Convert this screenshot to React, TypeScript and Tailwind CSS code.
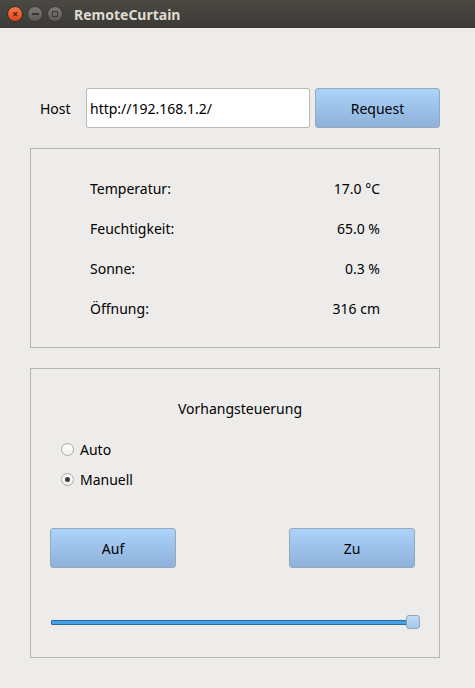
import React, { useState } from 'react';

const font = { fontFamily: '"Noto Sans", "DejaVu Sans", sans-serif' };

const readings = [
  { label: 'Temperatur:', value: '17.0 °C' },
  { label: 'Feuchtigkeit:', value: '65.0 %' },
  { label: 'Sonne:', value: '0.3 %' },
  { label: 'Öffnung:', value: '316 cm' },
];

function TitleBar() {
  return (
    <div className="flex h-[28px] items-center bg-gradient-to-b from-[#4a4944] to-[#3b3a36] pl-[7px]">
      <div className="flex h-[16px] w-[16px] items-center justify-center rounded-full border border-[#3a2a22] bg-gradient-to-b from-[#f4774b] to-[#e0451d] text-[10px] font-bold leading-none text-[#4a1a0a]">
        ×
      </div>
      <div className="ml-[4px] flex h-[16px] w-[16px] items-center justify-center rounded-full border border-[#3a3935] bg-gradient-to-b from-[#7a7973] to-[#5c5b56]">
        <div className="h-[2px] w-[7px] bg-[#3a3935]" />
      </div>
      <div className="ml-[4px] flex h-[16px] w-[16px] items-center justify-center rounded-full border border-[#3a3935] bg-gradient-to-b from-[#7a7973] to-[#5c5b56]">
        <div className="h-[6px] w-[6px] border border-[#3a3935]" />
      </div>
      <span className="ml-[11px] text-[14px] font-bold text-[#dfdbd2]">RemoteCurtain</span>
    </div>
  );
}

function BlueButton({ label, className = '' }: { label: string; className?: string }) {
  return (
    <button
      className={`flex h-[40px] items-center justify-center rounded-[3px] border border-[#98a8ba] bg-gradient-to-b from-[#acd4fb] to-[#8eb0d9] text-[14px] text-black ${className}`}
    >
      {label}
    </button>
  );
}

function Radio({ label, checked, onClick }: { label: string; checked: boolean; onClick: () => void }) {
  return (
    <div className="flex h-[30px] items-center cursor-pointer" onClick={onClick}>
      <div className="flex h-[13px] w-[13px] items-center justify-center rounded-full border border-[#a9a9a6] bg-gradient-to-b from-white to-[#eeeeec]">
        {checked && <div className="h-[5px] w-[5px] rounded-full bg-[#3c3c3c]" />}
      </div>
      <span className="ml-[6px] text-[14px] text-black">{label}</span>
    </div>
  );
}

export default function App() {
  const [mode, setMode] = useState<'auto' | 'manual'>('manual');

  return (
    <div className="h-[688px] w-[475px] bg-[#edecea]" style={font}>
      <TitleBar />

      <div className="pl-[30px]">
        {/* Host row */}
        <div className="mt-[60px] flex h-[40px] w-[410px] items-center pl-[10px]">
          <span className="w-[46px] text-[14px] text-black">Host</span>
          <input
            defaultValue="http://192.168.1.2/"
            className="h-[40px] w-[224px] rounded-[2px] border border-[#b8b8b5] bg-white px-[3px] text-[14px] text-black outline-none"
          />
          <BlueButton label="Request" className="ml-[5px] w-[125px]" />
        </div>

        {/* Readings */}
        <div className="mt-[20px] h-[200px] w-[410px] border border-[#b5b5b3] pt-[19px] pl-[59px] pr-[59px]">
          {readings.map((r) => (
            <div key={r.label} className="flex h-[40px] items-center justify-between text-[14px] text-black">
              <span>{r.label}</span>
              <span>{r.value}</span>
            </div>
          ))}
        </div>

        {/* Curtain control */}
        <div className="mt-[20px] h-[290px] w-[410px] border border-[#b5b5b3] pl-[19px] pr-[24px]">
          <div className="mt-[29px] ml-[15px] text-center text-[14px] text-black">Vorhangsteuerung</div>
          <div className="mt-[15px] pl-[11px]">
            <Radio label="Auto" checked={mode === 'auto'} onClick={() => setMode('auto')} />
            <Radio label="Manuell" checked={mode === 'manual'} onClick={() => setMode('manual')} />
          </div>
          <div className="mt-[34px] flex justify-between">
            <BlueButton label="Auf" className="w-[126px]" />
            <BlueButton label="Zu" className="w-[126px]" />
          </div>
          {/* Slider */}
          <div className="mt-[47px] flex items-center pl-[1px]">
            <div className="h-[5px] flex-1 rounded-[1px] border border-[#2a6a9c] bg-[#44a0e6]" />
            <div className="-ml-[1px] -mr-[5px] h-[14px] w-[14px] rounded-[3px] border border-[#9aa3ad] bg-gradient-to-b from-[#c0dcf8] to-[#a4c8ee]" />
          </div>
        </div>
      </div>
    </div>
  );
}
